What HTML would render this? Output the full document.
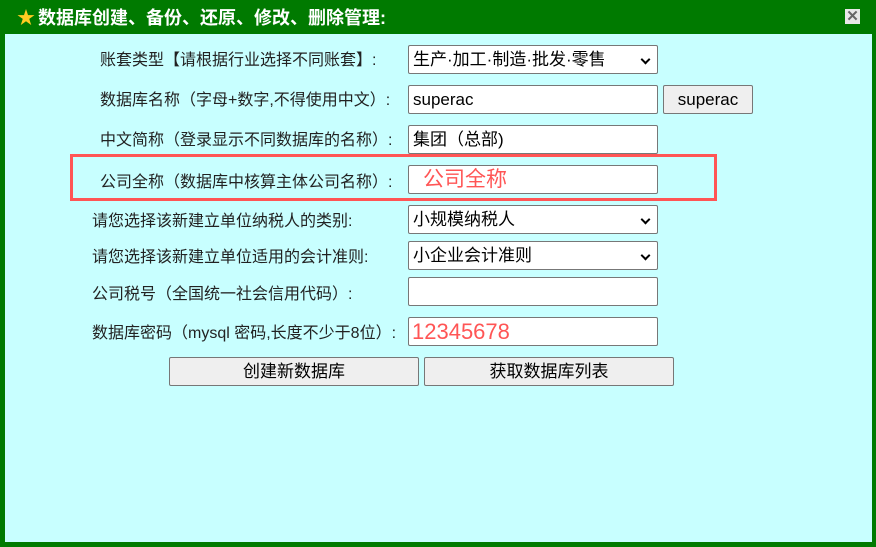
<!DOCTYPE html>
<html><head><meta charset="utf-8"><style>
*{margin:0;padding:0;box-sizing:border-box}
body{width:876px;height:547px;background:#007a00;position:relative;overflow:hidden;font-family:"Liberation Sans","Noto Sans CJK SC",sans-serif}
.body{position:absolute;left:5px;top:34px;width:867px;height:508px;background:#c8ffff}
.t{position:absolute;left:38px;top:6px;color:#fff;font-weight:bold;font-size:18px;line-height:24px}
.star{position:absolute;left:17px;top:8px;color:#ffcc22;font-size:18px;line-height:20px}
.x{position:absolute;left:845px;top:9px;width:15px;height:15px;background:#e8e8e8;color:#666;font-size:15px;line-height:15px;text-align:center;font-weight:bold}
.l{position:absolute;font-size:16px;color:#222;line-height:20px;white-space:nowrap}
.i{position:absolute;left:408px;width:250px;height:29px;background:#fff;border:1px solid #777;border-radius:2px;font-size:17px;line-height:27px;padding-left:4px;color:#000}
.s::after{content:"";position:absolute;right:8px;top:10px;width:5px;height:5px;border-right:2px solid #000;border-bottom:2px solid #000;transform:rotate(45deg)}
.b{position:absolute;height:29px;background:#efefef;border:1px solid #777;border-radius:2px;font-size:17px;line-height:27px;text-align:center;color:#000}
.red{position:absolute;left:70px;top:154px;width:647px;height:47px;border:3px solid #ff5555}
</style></head><body>
<div class="star">★</div>
<div class="t">数据库创建、备份、还原、修改、删除管理:</div>
<div class="x">✕</div>
<div class="body"></div>
<div class="l" style="left:100px;top:51px">账套类型【请根据行业选择不同账套】:</div>
<div class="i s" style="top:45px">生产·加工·制造·批发·零售</div>
<div class="l" style="left:100px;top:91px">数据库名称（字母+数字,不得使用中文）:</div>
<div class="i" style="top:85px">superac</div>
<div class="b" style="left:663px;top:85px;width:90px">superac</div>
<div class="l" style="left:100px;top:131px">中文简称（登录显示不同数据库的名称）:</div>
<div class="i" style="top:125px">集团（总部)</div>
<div class="red"></div>
<div class="l" style="left:100px;top:173px">公司全称（数据库中核算主体公司名称）:</div>
<div class="i" style="top:165px;color:#ff5555;font-size:21px;padding-left:14px">公司全称</div>
<div class="l" style="left:92px;top:212px">请您选择该新建立单位纳税人的类别:</div>
<div class="i s" style="top:205px">小规模纳税人</div>
<div class="l" style="left:92px;top:248px">请您选择该新建立单位适用的会计准则:</div>
<div class="i s" style="top:241px">小企业会计准则</div>
<div class="l" style="left:92px;top:285px">公司税号（全国统一社会信用代码）:</div>
<div class="i" style="top:277px"></div>
<div class="l" style="left:92px;top:324px">数据库密码（mysql 密码,长度不少于8位）:</div>
<div class="i" style="top:317px;color:#ff5555;font-size:22px;padding-left:3px">12345678</div>
<div class="b" style="left:169px;top:357px;width:250px">创建新数据库</div>
<div class="b" style="left:424px;top:357px;width:250px">获取数据库列表</div>
</body></html>
